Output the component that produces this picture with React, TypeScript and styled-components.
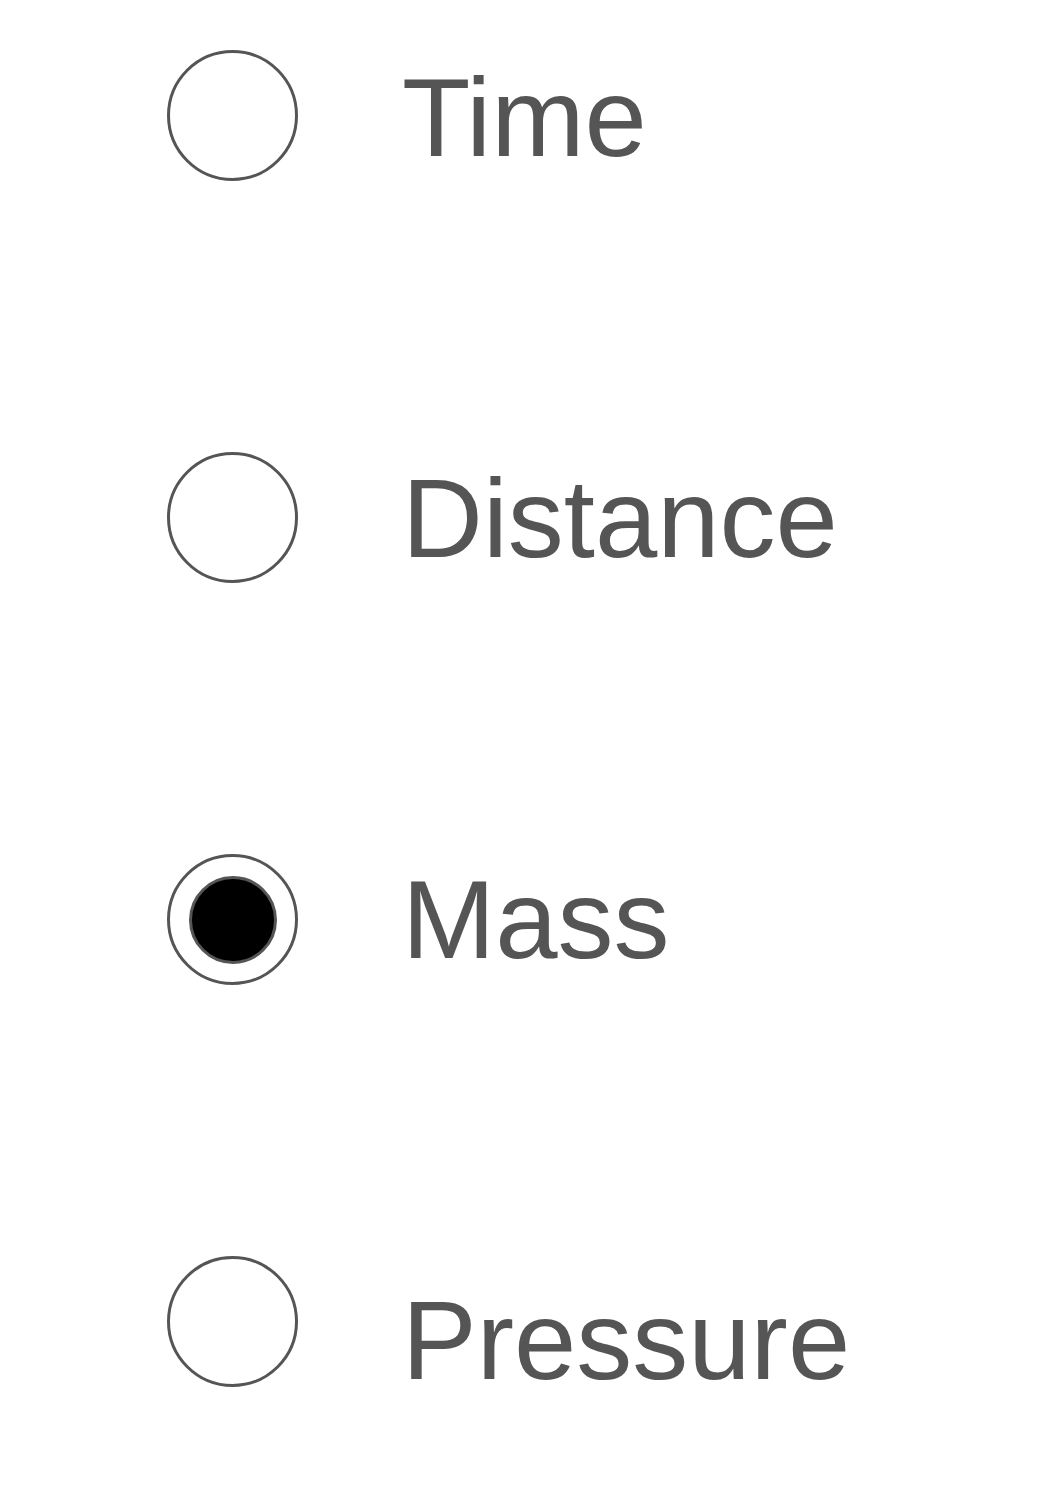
import React from "react";
import styled, { createGlobalStyle } from "styled-components";

const Global = createGlobalStyle`
  html, body { margin: 0; padding: 0; background: #ffffff; }
  body { font-family: "Liberation Sans", Arial, sans-serif; }
`;

const List = styled.div`
  display: flex;
  flex-direction: column;
  gap: 271px;
  padding: 50px 0 0 167px;
`;

const Row = styled.label`
  display: flex;
  align-items: center;
  height: 131px;
  gap: 104px;
`;

const Radio = styled.span`
  box-sizing: border-box;
  width: 131px;
  height: 131px;
  flex: none;
  border: 3px solid #555555;
  border-radius: 50%;
  display: flex;
  align-items: center;
  justify-content: center;
  background: #ffffff;
`;

const Dot = styled.span`
  box-sizing: border-box;
  width: 88px;
  height: 88px;
  border-radius: 50%;
  background: #000000;
  border: 3px solid #555555;
`;

const Label = styled.span<{ $shift: number }>`
  font-family: "Liberation Sans", Arial, sans-serif;
  font-size: 112px;
  line-height: 1;
  color: #555555;
  margin-top: ${(p) => p.$shift}px;
`;

const options = [
  { label: "Time", shift: 5 },
  { label: "Distance", shift: 3 },
  { label: "Mass", shift: 0 },
  { label: "Pressure", shift: 38 },
];

export default function App() {
  const selected = "Mass";
  return (
    <>
      <Global />
      <List role="radiogroup">
        {options.map((o) => (
          <Row key={o.label} role="radio" aria-checked={o.label === selected}>
            <Radio>{o.label === selected && <Dot />}</Radio>
            <Label $shift={o.shift}>{o.label}</Label>
          </Row>
        ))}
      </List>
    </>
  );
}
